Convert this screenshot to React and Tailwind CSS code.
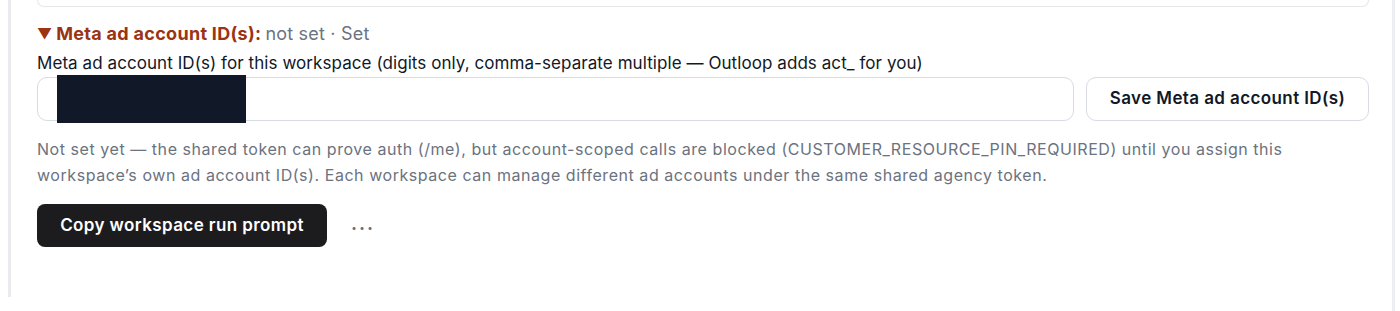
import React from 'react';

export default function App() {
  return (
    <div className="w-full h-[311px] bg-white overflow-hidden" style={{ fontFamily: 'Inter, "Noto Sans", sans-serif' }}>
      <div className="ml-[8px] w-[1387px] h-[311px] border-r-[3px] border-[#eceef2]">
        <div className="h-[297px] border-l-[3px] border-[#e8eaee] pl-[26px] pr-[23px]">
          {/* bottom of the previous card */}
          <div className="h-[7px] border-x border-b border-[#e5e7eb] rounded-b-[12px]" />

          <div className="mt-[16px] flex items-center gap-[4px] text-[18px] leading-[22px]">
            <span className="text-[#9a3412] text-[15px]">▼</span>
            <span className="font-bold text-[#9a3412] tracking-[0.3px]">Meta ad account ID(s):</span>
            <span className="text-[#6b7280] tracking-[0.2px]">not set · Set</span>
          </div>

          <p className="mt-[7px] text-[17px] leading-[22px] tracking-[0.07px] text-[#111827]">
            Meta ad account ID(s) for this workspace (digits only, comma-separate multiple — Outloop adds act_ for you)
          </p>

          <div className="mt-[3px] flex gap-[12px]">
            <div className="relative flex-1 h-[44px] rounded-[10px] border border-[#d8dbe2] bg-white">
              <div className="absolute left-[19px] top-[-3px] w-[189px] h-[48px] bg-[#111827]" />
            </div>
            <button className="h-[44px] w-[283px] rounded-[10px] border border-[#d8dbe2] bg-white text-[17px] tracking-[0.4px] font-semibold text-[#111827]">
              Save Meta ad account ID(s)
            </button>
          </div>

          <p className="mt-[15px] max-w-[1300px] text-[16px] leading-[26px] tracking-[0.55px] text-[#6b7280]">
            Not set yet — the shared token can prove auth (/me), but account-scoped calls are blocked (CUSTOMER_RESOURCE_PIN_REQUIRED) until you assign this workspace’s own ad account ID(s). Each workspace can manage different ad accounts under the same shared agency token.
          </p>

          <div className="mt-[16px] flex items-center gap-[24px]">
            <button className="h-[43px] w-[290px] rounded-[8px] bg-[#1c1c1f] text-white text-[17px] tracking-[0.4px] font-semibold">
              Copy workspace run prompt
            </button>
            <span className="pt-[5px] text-[#6b7280] text-[18px] font-bold tracking-[2px]">···</span>
          </div>
        </div>
      </div>
    </div>
  );
}
